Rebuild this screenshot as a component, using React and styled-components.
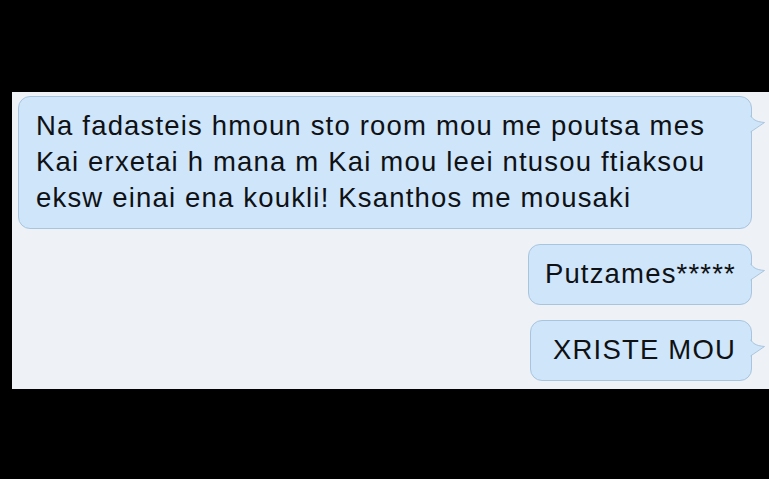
import styled, { createGlobalStyle } from "styled-components";

const GlobalStyle = createGlobalStyle`
  html, body {
    margin: 0;
    padding: 0;
    background: #000;
  }
  body {
    width: 769px;
    height: 479px;
    overflow: hidden;
    font-family: "Liberation Sans", Arial, sans-serif;
  }
`;

const Screen = styled.div`
  width: 769px;
  height: 479px;
  background: #000;
  padding-top: 92px;
  padding-left: 12px;
  box-sizing: border-box;
`;

const Thread = styled.div`
  height: 297px;
  box-sizing: border-box;
  background: #eef1f6;
  padding: 4px 17px 0 6px;
  display: flex;
  flex-direction: column;
  align-items: flex-end;
  gap: 15px;
`;

const Bubble = styled.div`
  position: relative;
  align-self: ${(p) => (p.$wide ? "stretch" : "flex-end")};
  background: #cee5fa;
  border: 1px solid #a9c5de;
  border-radius: 12px;
  padding: 11px 15px 12px ${(p) => p.$padLeft || 17}px;
  color: #0f1114;
  font-size: 27.5px;
  letter-spacing: 1.18px;
  line-height: 36px;
  white-space: nowrap;
`;

const Line = styled.span`
  display: block;
`;

const Tail = styled.svg`
  position: absolute;
  right: -15px;
  top: 19px;
  width: 16px;
  height: 18px;
  overflow: visible;
`;

const BubbleTail = () => (
  <Tail viewBox="0 0 16 18">
    <path
      d="M0 0 C1 0 2 2 4 3.5 C7 5.5 10 6 14.5 6.5 L0 16 Z"
      fill="#cee5fa"
    />
    <path
      d="M0.5 0 C1 0 2 2 4 3.5 C7 5.5 10 6 14.5 6.5 L0.5 16"
      fill="none"
      stroke="#a9c5de"
      strokeWidth="1"
    />
  </Tail>
);

const messages = [
  {
    lines: [
      "Na fadasteis hmoun sto room mou me poutsa mes",
      "Kai erxetai h mana m Kai mou leei ntusou ftiaksou",
      "eksw einai ena koukli! Ksanthos me mousaki",
    ],
    wide: true,
  },
  { lines: ["Putzames*****"], padLeft: 16 },
  { lines: ["XRISTE MOU"], padLeft: 22 },
];

export default function App() {
  return (
    <>
      <GlobalStyle />
      <Screen>
        <Thread>
          {messages.map((m, i) => (
            <Bubble key={i} $wide={m.wide} $padLeft={m.padLeft}>
              {m.lines.map((l, j) => (
                <Line key={j}>{l}</Line>
              ))}
              <BubbleTail />
            </Bubble>
          ))}
        </Thread>
      </Screen>
    </>
  );
}
